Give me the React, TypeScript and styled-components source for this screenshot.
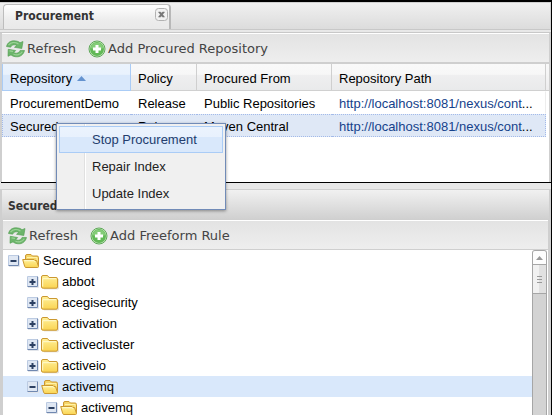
import React from "react";
import styled, { createGlobalStyle, css } from "styled-components";

const Global = createGlobalStyle`
  * { box-sizing: border-box; }
  body { margin: 0; background: #000; color: #000; font-family: "Liberation Sans", Arial, sans-serif; font-size: 13px; }
  button { margin: 0; padding: 0; border: 0; background: none; color: inherit; font: inherit; text-align: left; cursor: pointer; }
`;

const Frame = styled.main`
  position: relative;
  display: flex;
  flex-direction: column;
  height: 100vh;
  overflow: hidden;
  border-top: 2px solid #000;
  border-right: 1px solid #000;
  background: #e8e8e8;
`;

const TabStrip = styled.header`
  display: flex;
  flex: none;
  align-items: flex-end;
  height: 28px;
  padding-left: 3px;
  border-top: 1px solid #d0d0d0;
  border-bottom: 1px solid #c8c8c8;
  border-right: 1px solid #d0d0d0;
  background: linear-gradient(#f0f0f0, #dcdcdc);
`;

const Tab = styled.div`
  display: flex;
  align-items: flex-start;
  justify-content: space-between;
  width: 168px;
  height: 25px;
  padding: 3px 1px 0 11px;
  border: 1px solid #bdbdbd;
  border-right: 2px solid #b8b8b8;
  border-bottom: 0;
  border-radius: 4px 4px 0 0;
  background: linear-gradient(#ffffff, #ededed 60%, #e9e9e9);
`;

const titleFont = css`
  font-family: "DejaVu Sans Condensed", "DejaVu Sans", Verdana, sans-serif;
  font-size: 12px;
  font-weight: bold;
  line-height: 16px;
  color: #333;
`;

const TabLabel = styled.button`
  ${titleFont}
`;

const CloseButton = styled.button`
  display: flex;
  width: 13px;
  height: 13px;
`;

const Panel = styled.section<{ $grow?: boolean }>`
  display: flex;
  flex-direction: column;
  flex: ${(p) => (p.$grow ? "1 1 0" : "none")};
  min-height: 0;
  border-left: 2px solid #cfcfcf;
  border-right: 2px solid #cfcfcf;
  background: #fff;
`;

const StripGap = styled.div`
  flex: none;
  height: 3px;
  border-bottom: 1px solid #c8c8c8;
  background: #e8e8e8;
`;

const Toolbar = styled.div<{ $rule: number; $inset: number }>`
  display: flex;
  flex: none;
  align-items: center;
  gap: 12px;
  height: ${(p) => 29 + p.$rule}px;
  padding: 2px 0 0 ${(p) => p.$inset}px;
  border-top: 1px solid #fff;
  border-bottom: ${(p) => p.$rule}px solid #cfcfcf;
  background: linear-gradient(#e3e3e3, #eee);
`;

const ToolButton = styled.button`
  display: flex;
  align-items: center;
  gap: 2px;
  font-family: "DejaVu Sans", Verdana, sans-serif;
  font-size: 13px;
  line-height: 18px;
  color: #444;
  white-space: nowrap;
`;

const GridBody = styled.div`
  height: 118px;
  padding-right: 3px;
  background: linear-gradient(#f9f9f9 0, #ededee 26px, #d0d0d0 26px, #d0d0d0 27px, #fff 27px);
`;

const Grid = styled.table`
  width: 100%;
  table-layout: fixed;
  border-collapse: separate;
  border-spacing: 0;
  font-size: 13px;
`;

const HeadCell = styled.th<{ $width?: number; $sorted?: boolean }>`
  width: ${(p) => (p.$width ? `${p.$width}px` : "auto")};
  height: 27px;
  padding: 2px 0 0 7px;
  font-weight: normal;
  text-align: left;
  white-space: nowrap;
  border-right: 1px solid #cfcfcf;
  border-bottom: 1px solid #d0d0d0;
  background: linear-gradient(#f9f9f9, #f7f7f7 40%, #efeff0 42%, #e9eaeb);
  ${(p) =>
    p.$sorted &&
    css`
      border: 1px solid #aaccf6;
      border-top: 0;
      background: linear-gradient(#ebf3fd, #e9f2fd 40%, #d9e8fb 42%, #d9e8fb);
    `}
`;

const SortButton = styled.button`
  display: inline-flex;
  align-items: center;
  gap: 5px;
`;

const DataRow = styled.tr<{ $selected?: boolean }>`
  background: ${(p) => (p.$selected ? "#dfe8f6" : "#fff")};
  td {
    height: 23px;
    border-top: 1px ${(p) => (p.$selected ? "dotted #a3bae9" : "solid #fff")};
    border-bottom: 1px ${(p) => (p.$selected ? "dotted #a3bae9" : "solid #fff")};
  }
  td:first-child { border-left: 1px ${(p) => (p.$selected ? "dotted #a3bae9" : "solid #fff")}; }
  td:last-child { border-right: 1px ${(p) => (p.$selected ? "dotted #a3bae9" : "solid #ededed")}; }
`;

const Cell = styled.td`
  padding: 2px 0 0 7px;
  white-space: nowrap;
`;

const PathLink = styled.a`
  color: #15428b;
  text-decoration: none;
`;

const Splitter = styled.div`
  flex: none;
  height: 7px;
  margin-left: 1px;
  border-top: 1px solid #000;
`;

const PanelTitle = styled.h2`
  ${titleFont}
  flex: none;
  height: 31px;
  margin: 0;
  padding: 8px 0 0 6px;
  border-top: 1px solid #cfcfcf;
  border-bottom: 1px solid #cfcfcf;
  background: linear-gradient(#f1f1f1, #d0d0d0);
`;

const PanelInner = styled.div`
  display: flex;
  flex-direction: column;
  flex: 1 1 0;
  min-height: 0;
  border-left: 1px solid #cfcfcf;
  border-right: 1px solid #cfcfcf;
`;

const TreeArea = styled.div`
  display: flex;
  flex: 1 1 0;
  min-height: 0;
  padding-right: 1px;
`;

const Tree = styled.ul`
  flex: 1;
  min-width: 0;
  margin: 0;
  padding: 0;
  overflow: hidden;
  list-style: none;
`;

const TreeRow = styled.li<{ $level: number; $selected?: boolean }>`
  display: flex;
  align-items: center;
  height: 21px;
  padding-left: ${(p) => 5 + p.$level * 19}px;
  background: ${(p) => (p.$selected ? "#d9e8fb" : "transparent")};
`;

const Expander = styled.button`
  display: flex;
  width: 14px;
`;

const NodeLabel = styled.span`
  margin-left: 3px;
  line-height: 20px;
  white-space: nowrap;
`;

const ScrollTrack = styled.div`
  display: flex;
  flex-direction: column;
  flex: none;
  width: 15px;
  border: 1px solid #a6a6a6;
  border-bottom: 0;
  border-radius: 3px 3px 0 0;
  background: #d3d3d3;
`;

const ScrollUp = styled.button`
  display: flex;
  align-items: center;
  justify-content: center;
  height: 14px;
  border-bottom: 1px solid #a6a6a6;
  border-radius: 2px 2px 0 0;
  background: #fdfdfd;
`;

const ScrollThumb = styled.div`
  display: flex;
  flex-direction: column;
  align-items: center;
  justify-content: center;
  gap: 2px;
  height: 29px;
  border-bottom: 1px solid #a6a6a6;
  background: linear-gradient(90deg, #f1f1f1 50%, #e1e1e1 50%);
`;

const Grip = styled.span`
  width: 5px;
  height: 1px;
  background: #999;
`;

const Menu = styled.div`
  position: absolute;
  left: 56px;
  top: 121px;
  width: 170px;
  padding: 2px;
  border: 1px solid #718bb7;
  background: linear-gradient(90deg, #f0f0f0 27px, #e0e0e0 27px, #e0e0e0 28px, #fff 28px, #fff 29px, #f0f0f0 29px);
  box-shadow: 0 1px 3px rgba(0, 0, 0, 0.4);
`;

const MenuItem = styled.button<{ $active?: boolean }>`
  display: block;
  width: 100%;
  height: 27px;
  padding-left: 32px;
  border: 1px solid transparent;
  color: #222;
  ${(p) =>
    p.$active &&
    css`
      border-color: #aaccf6;
      color: #233d6d;
      background: linear-gradient(#ebf3fd, #e8f1fd 40%, #d9e8fb 42%);
    `}
`;

function RefreshIcon() {
  return (
    <svg width="19" height="18" viewBox="0 0 19 18" aria-hidden="true">
      <g fill="#6cb56b" stroke="#4f9a4d" strokeWidth=".6" strokeLinejoin="round">
        <path d="M.5 6.500C1.500 2.500 4.500.8 8 .8c2.600 0 4.600.7 6 1.900L17 1.500 15.800 8.500 8.500 7.300l2.300-1.700C9 4.300 6 4.500 4.600 7.200Z" />
        <path d="M18.500 10.500c-1 4-4 6.300-7.500 6.300-2.600 0-4.600-.7-6-1.900L2 16.300 2.200 9.300l7.500 1.200-1.800 1.900c1.800 1.300 4.800 1.100 6.200-2Z" />
      </g>
      <path d="M2.500 5.200C4.500 2.300 8.500 1.600 12.500 3.900M3.500 10.800l3.500.5M7.500 14.200c3 1.400 7 .6 8.800-2.400" fill="none" stroke="#9ad295" strokeWidth="1.200" />
    </svg>
  );
}

function AddIcon() {
  return (
    <svg width="18" height="18" viewBox="0 0 18 18" aria-hidden="true">
      <circle cx="9" cy="9" r="8" fill="#d3edcb" stroke="#5fa859" />
      <circle cx="9" cy="9" r="7" fill="#62b957" />
      <path d="M2.600 8a6.500 6.500 0 0 1 12.800 0c-3 1.800-9.800 1.800-12.800 0Z" fill="#84cc78" />
      <path d="M7.500 5h3v2.500H13v3h-2.500V13h-3v-2.500H5v-3h2.500Z" fill="#fff" />
    </svg>
  );
}

function CloseIcon() {
  return (
    <svg width="13" height="13" viewBox="0 0 13 13" aria-hidden="true">
      <rect x=".5" y=".5" width="12" height="12" rx="3" fill="#f2f2f2" stroke="#b2b2b2" />
      <path d="M3.500 4h2l1 1.300L7.500 4h2L7.700 6.500l1.800 2.600h-2l-1-1.400-1 1.400h-2l1.800-2.600Z" fill="#777" stroke="#777" strokeWidth=".5" />
    </svg>
  );
}

function ExpanderIcon({ open }: { open?: boolean }) {
  return (
    <svg width="12" height="12" viewBox="0 0 12 12" aria-hidden="true">
      <path d="M11.500 1v10.500H1" fill="none" stroke="#e2e5ea" />
      <rect x="1" y="1" width="9.500" height="9.500" fill="#dfe7f3" />
      <path d="M.5 10.500V.5h10" fill="none" stroke="#bccbe2" />
      <path d="M.5 10.500h10V.5" fill="none" stroke="#7088b0" />
      <path d={open ? "M2.500 6h6" : "M2.500 6h6M5.500 3v6"} stroke="#2c4062" strokeWidth="2" />
    </svg>
  );
}

function FolderIcon({ open }: { open?: boolean }) {
  return (
    <svg width="18" height="16" viewBox="0 0 18 16" aria-hidden="true">
      <defs>
        <linearGradient id="folderFront" x2="0" y2="1">
          <stop stopColor="#fff09a" />
          <stop offset="1" stopColor="#fad452" />
        </linearGradient>
      </defs>
      {open ? (
        <>
          <path d="M3.500 13V3q0-1.500 1.500-1.500h4L10.500 3H15q1.500 0 1.500 1.500V13Z" fill="#f5d568" stroke="#cb9830" />
          <path d="M5 4.500h10v3" fill="none" stroke="#fff2a8" />
          <path d="M.7 6.500H12l1 1h1.500l2 6q0 1-1 1H4q-1 0-1.300-1Z" fill="url(#folderFront)" stroke="#cb9830" strokeLinejoin="round" />
          <path d="M2.200 7.700h9.600l1 1" fill="none" stroke="#fffbd0" />
        </>
      ) : (
        <>
          <path d="M17.200 5v9.800H3" fill="none" stroke="#dcd7cc" />
          <path d="M.5 13V3Q.5 1.500 2 1.500h4.500L8 3.500h7q1.500 0 1.500 1.300V13q0 1.200-1.500 1.200H2Q.5 14.200.5 13Z" fill="url(#folderFront)" stroke="#cb9830" />
          <path d="M1.700 12.500V4.700H15" fill="none" stroke="#fffbd0" />
        </>
      )}
    </svg>
  );
}

const repositories = [
  { name: "ProcurementDemo", policy: "Release", source: "Public Repositories" },
  { name: "Secured", policy: "Release", source: "Maven Central", selected: true },
];
const repositoryPath = "http://localhost:8081/nexus/cont";

const nodes = [
  { name: "Secured", level: 0, open: true },
  { name: "abbot", level: 1 },
  { name: "acegisecurity", level: 1 },
  { name: "activation", level: 1 },
  { name: "activecluster", level: 1 },
  { name: "activeio", level: 1 },
  { name: "activemq", level: 1, open: true, selected: true },
  { name: "activemq", level: 2, open: true },
];

export default function App() {
  return (
    <Frame>
      <Global />
      <TabStrip>
        <Tab>
          <TabLabel>Procurement</TabLabel>
          <CloseButton aria-label="Close tab"><CloseIcon /></CloseButton>
        </Tab>
      </TabStrip>
      <StripGap />
      <Panel>
        <Toolbar $rule={2} $inset={4}>
          <ToolButton><RefreshIcon />Refresh</ToolButton>
          <ToolButton><AddIcon />Add Procured Repository</ToolButton>
        </Toolbar>
        <GridBody>
          <Grid>
            <thead>
              <tr>
                <HeadCell $width={129} $sorted aria-sort="ascending">
                  <SortButton>
                    Repository
                    <svg width="9" height="5" viewBox="0 0 9 5" aria-hidden="true"><path d="M0 5 4.500 0 9 5Z" fill="#6593cf" /></svg>
                  </SortButton>
                </HeadCell>
                <HeadCell $width={66}>Policy</HeadCell>
                <HeadCell $width={135}>Procured From</HeadCell>
                <HeadCell>Repository Path</HeadCell>
              </tr>
            </thead>
            <tbody>
              {repositories.map((r) => (
                <DataRow key={r.name} $selected={r.selected}>
                  <Cell>{r.name}</Cell>
                  <Cell>{r.policy}</Cell>
                  <Cell>{r.source}</Cell>
                  <Cell><PathLink href={repositoryPath}>{repositoryPath}</PathLink>...</Cell>
                </DataRow>
              ))}
            </tbody>
          </Grid>
        </GridBody>
      </Panel>
      <Splitter />
      <Panel $grow>
        <PanelTitle>Secured</PanelTitle>
        <PanelInner>
          <Toolbar $rule={1} $inset={5}>
            <ToolButton><RefreshIcon />Refresh</ToolButton>
            <ToolButton><AddIcon />Add Freeform Rule</ToolButton>
          </Toolbar>
          <TreeArea>
            <Tree>
              {nodes.map((n) => (
                <TreeRow key={`${n.level}-${n.name}`} $level={n.level} $selected={n.selected}>
                  <Expander aria-label={`Toggle ${n.name}`}><ExpanderIcon open={n.open} /></Expander>
                  <FolderIcon open={n.open} />
                  <NodeLabel>{n.name}</NodeLabel>
                </TreeRow>
              ))}
            </Tree>
            <ScrollTrack>
              <ScrollUp aria-label="Scroll up">
                <svg width="7" height="4" viewBox="0 0 7 4" aria-hidden="true"><path d="M0 4 3.500 0 7 4Z" fill="#999" /></svg>
              </ScrollUp>
              <ScrollThumb><Grip /><Grip /><Grip /></ScrollThumb>
            </ScrollTrack>
          </TreeArea>
        </PanelInner>
      </Panel>
      <Menu role="menu">
        <MenuItem role="menuitem" $active>Stop Procurement</MenuItem>
        <MenuItem role="menuitem">Repair Index</MenuItem>
        <MenuItem role="menuitem">Update Index</MenuItem>
      </Menu>
    </Frame>
  );
}
